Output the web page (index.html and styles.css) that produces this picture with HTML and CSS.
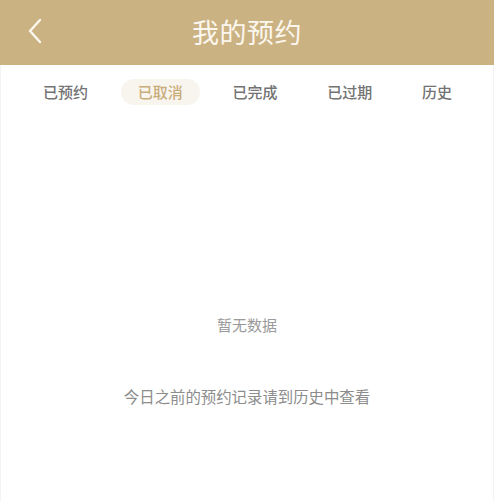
FILE: index.html
```html
<!DOCTYPE html>
<html lang="zh">
<head>
<meta charset="utf-8">
<title>我的预约</title>
<link rel="stylesheet" href="styles.css">
</head>
<body>
<div class="page">
  <header class="nav">
    <span class="back">
      <svg width="16" height="26" viewBox="0 0 16 26"><path d="M13 2 L3 13 L13 24" fill="none" stroke="#fbf7ee" stroke-width="2.4" stroke-linecap="round" stroke-linejoin="round"/></svg>
    </span>
    <h1 class="title">我的预约</h1>
  </header>
  <nav class="tabs">
    <span class="tab">已预约</span>
    <span class="tab active">已取消</span>
    <span class="tab">已完成</span>
    <span class="tab">已过期</span>
    <span class="tab">历史</span>
  </nav>
  <main class="content">
    <p class="empty">暂无数据</p>
    <p class="hint">今日之前的预约记录请到历史中查看</p>
  </main>
</div>
</body>
</html>
```
FILE: styles.css
```css
* { box-sizing: border-box; }
html, body { margin: 0; padding: 0; background: #fff; }
body {
  font-family: "Noto Sans CJK SC", "Noto Sans", sans-serif;
  width: 494px;
  height: 501px;
  overflow: hidden;
}
.page {
  height: 501px;
  display: flex;
  flex-direction: column;
  border-left: 1px solid #f3f3f3;
  border-right: 1px solid #f3f3f3;
}
.nav {
  position: relative;
  height: 65px;
  background: #cbb283;
  display: flex;
  align-items: center;
  justify-content: center;
  margin: 0 -1px;
}
.back {
  position: absolute;
  left: 27px;
  top: 18px;
  display: flex;
}
.title {
  margin: 0;
  font-size: 27px;
  font-weight: 400;
  color: #fbf7ee;
  letter-spacing: 0.5px;
  line-height: 1;
  padding-bottom: 2px;
}
.tabs {
  display: flex;
  justify-content: space-between;
  align-items: center;
  padding: 14px 24px 0 25px;
}
.tab {
  font-size: 15px;
  font-weight: 500;
  color: #737373;
  line-height: 26px;
  height: 26px;
  padding: 0 17px;
  border-radius: 13px;
}
.active {
  color: #c8ad7b;
  background: #f8f5ef;
}
.content {
  flex: 1;
  display: flex;
  flex-direction: column;
  align-items: center;
  padding-top: 210px;
}
.empty {
  margin: 0;
  font-size: 15px;
  line-height: 20px;
  color: #9a9a9a;
}
.hint {
  margin: 51px 0 0;
  font-size: 15.4px;
  line-height: 20px;
  color: #8c8c8c;
}
```
